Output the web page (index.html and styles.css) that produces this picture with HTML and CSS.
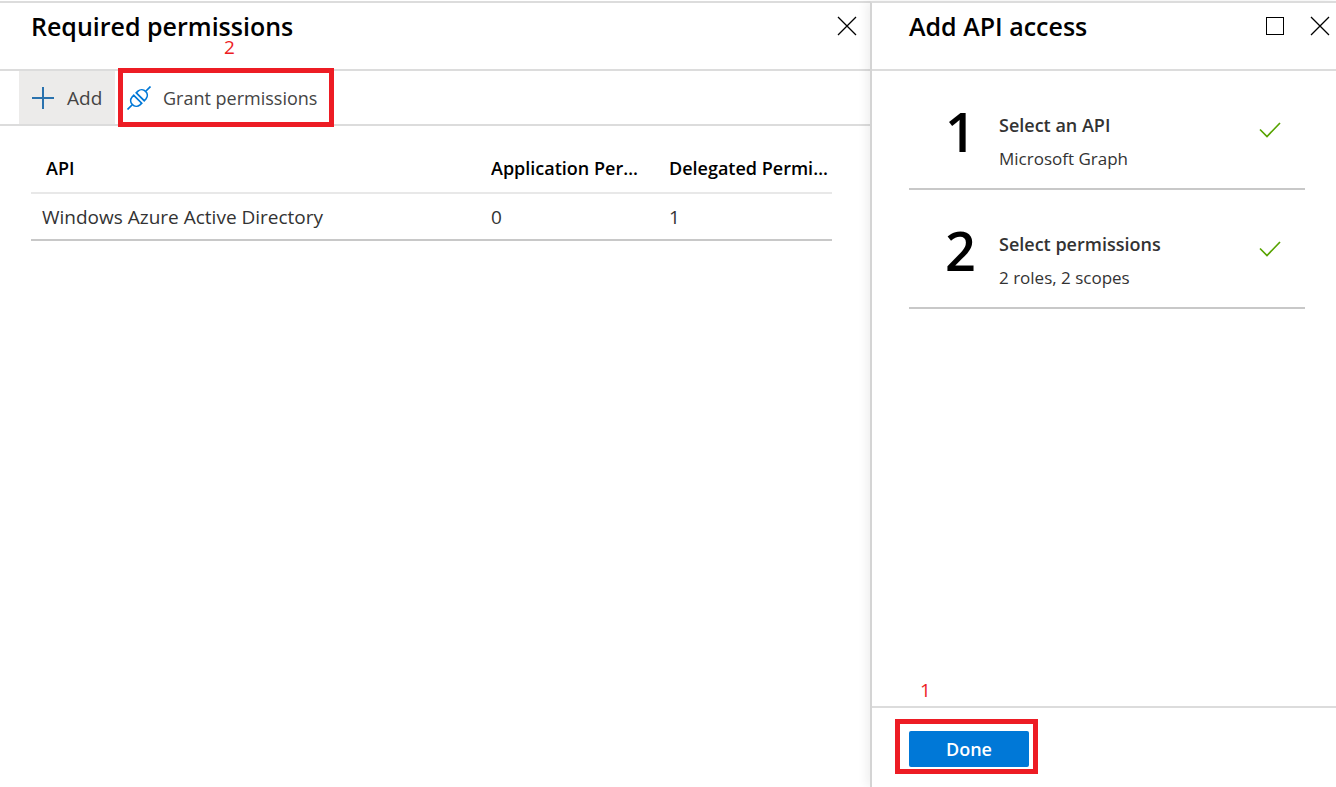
FILE: index.html
```html
<!DOCTYPE html>
<html lang="en">
<head>
<meta charset="utf-8">
<title>Required permissions</title>
<meta name="viewport" content="width=device-width, initial-scale=1">
<link rel="stylesheet" href="styles.css">
</head>
<body>
<div class="portal">
  <main class="blade blade-main">
    <header class="blade-header">
      <h1 class="blade-title">Required permissions</h1>
      <div class="blade-actions">
        <button class="icon-button" type="button" aria-label="Close required permissions">
          <svg width="20" height="20" viewBox="0 0 20 20"><path d="M1 1L19 19M19 1L1 19" fill="none" stroke="#000" stroke-width="1.3"/></svg>
        </button>
      </div>
    </header>
    <div class="toolbar">
      <button class="tool tool-add" type="button">
        <svg width="24" height="24" viewBox="0 0 24 24"><path d="M12 1V23M1 12H23" fill="none" stroke="#2a72ae" stroke-width="2"/></svg>
        <span>Add</span>
      </button>
      <div class="callout callout-tool">
        <button class="tool tool-grant" type="button">
          <svg width="24" height="24" viewBox="0 0 24 24" fill="none" stroke="#0078d7" stroke-width="1.7"><path d="M0.5 23.5L5 19M19 5L23.5 0.5"/><path d="M6.8 9.3L14.7 17.2L13 18.9A5.6 5.6 0 0 1 5.1 11Z"/><path d="M9.3 6.8L17.2 14.7L18.9 13A5.6 5.6 0 0 0 11 5.1Z"/></svg>
          <span>Grant permissions</span>
        </button>
        <span class="marker marker-tool">2</span>
      </div>
    </div>
    <table class="grid">
      <colgroup><col><col class="col-app"><col class="col-delegated"></colgroup>
      <thead>
        <tr><th scope="col">API</th><th scope="col">Application Permissions</th><th scope="col">Delegated Permissions</th></tr>
      </thead>
      <tbody>
        <tr><td>Windows Azure Active Directory</td><td>0</td><td>1</td></tr>
      </tbody>
    </table>
  </main>
  <aside class="blade blade-side">
    <header class="blade-header">
      <h2 class="blade-title">Add API access</h2>
      <div class="blade-actions">
        <button class="icon-button" type="button" aria-label="Maximize">
          <svg width="20" height="20" viewBox="0 0 20 20"><rect x="1.5" y="1.5" width="17" height="17" fill="none" stroke="#000"/></svg>
        </button>
        <button class="icon-button" type="button" aria-label="Close add API access">
          <svg width="20" height="20" viewBox="0 0 20 20"><path d="M1 1L19 19M19 1L1 19" fill="none" stroke="#000" stroke-width="1.3"/></svg>
        </button>
      </div>
    </header>
    <ol class="steps">
      <li class="step">
        <span class="step-number">1</span>
        <div class="step-text"><h3 class="step-title">Select an API</h3><p class="step-detail">Microsoft Graph</p></div>
        <svg class="step-check" width="22" height="16" viewBox="0 0 22 16"><path d="M1 7.5L8 14.5L21 1" fill="none" stroke="#57a300" stroke-width="1.7"/></svg>
      </li>
      <li class="step">
        <span class="step-number">2</span>
        <div class="step-text"><h3 class="step-title">Select permissions</h3><p class="step-detail">2 roles, 2 scopes</p></div>
        <svg class="step-check" width="22" height="16" viewBox="0 0 22 16"><path d="M1 7.5L8 14.5L21 1" fill="none" stroke="#57a300" stroke-width="1.7"/></svg>
      </li>
    </ol>
    <footer class="blade-footer">
      <div class="callout callout-done">
        <button class="done" type="button">Done</button>
        <span class="marker marker-done">1</span>
      </div>
    </footer>
  </aside>
</div>
</body>
</html>
```
FILE: styles.css
```css
* { box-sizing: border-box; }

body {
  margin: 0;
  background: #fff;
  color: #333;
  font-family: "Segoe UI", "Open Sans", "Noto Sans", sans-serif;
  font-size: 18px;
  line-height: 24px;
}

button { font: inherit; color: inherit; border: 0; background: none; padding: 0; }
h1, h2, h3, p, ol { margin: 0; padding: 0; }
svg { display: block; flex: none; }

.portal { display: flex; min-height: 100vh; padding-top: 1px; }

.blade { display: flex; flex-direction: column; border-top: 2px solid #dcdcdc; }
.blade-main { flex: 1; min-width: 0; }
.blade-side {
  width: 35%;
  max-width: 466px;
  border-left: 2px solid #d4d4d4;
  box-shadow: -3px 0 10px rgba(0, 0, 0, 0.07);
}

.blade-header {
  display: flex;
  justify-content: space-between;
  height: 68px;
  padding: 9px 13px 0 31px;
  border-bottom: 2px solid #dcdcdc;
}
.blade-side .blade-header { padding: 9px 6px 0 37px; }
.blade-title { color: #000; font-size: 25px; line-height: 28px; font-weight: 600; white-space: nowrap; }
.blade-actions { display: flex; gap: 25px; height: 28px; align-items: center; }
.icon-button { display: block; }

.toolbar { display: flex; height: 55px; padding-left: 19px; border-bottom: 2px solid #dcdcdc; }
.tool { display: flex; align-items: center; color: #444; white-space: nowrap; }
.tool-add { gap: 12px; width: 96px; padding-left: 12px; background: #ecebea; font-size: 19px; }
.tool-grant { gap: 12px; height: 100%; padding-left: 4px; }

.callout { position: relative; border: 5px solid #ed1c24; }
.callout-tool { width: 216px; height: 59px; margin: -3px 0 0 3px; }
.callout-done { padding: 7px 4px 2px 9px; }
.marker { position: absolute; color: #ed1c24; font-size: 19px; line-height: 14px; }
.marker-tool { left: 101px; top: -33px; }
.marker-done { left: 20px; top: -41px; }

.grid {
  width: calc(100% - 69px);
  margin: 17px 0 0 31px;
  table-layout: fixed;
  border-collapse: collapse;
  text-align: left;
}
.col-app { width: 178px; }
.col-delegated { width: 163px; }
.grid th, .grid td { padding: 0; overflow: hidden; text-overflow: ellipsis; white-space: nowrap; }
.grid th { height: 50px; color: #000; font-weight: 600; border-bottom: 2px solid #e8e8e8; }
.grid td { height: 47px; font-size: 19px; border-bottom: 2px solid #c8c8c8; }
.grid th:first-child { padding-left: 15px; }
.grid td:first-child { padding-left: 11px; }
.grid th:nth-child(2) { padding-right: 24px; }

.steps { flex: 1; padding: 0 31px 0 37px; list-style: none; }
.step { display: flex; height: 119px; padding-top: 33px; border-bottom: 2px solid #c8c8c8; }
.step-number { width: 90px; padding-left: 36px; color: #000; font-size: 54px; line-height: 54px; font-weight: 600; }
.step-text { flex: 1; padding-top: 9px; }
.step-title { font-size: 18px; line-height: 24px; font-weight: 600; }
.step-detail { padding-top: 10px; font-size: 17px; }
.step-check { margin: 18px 24px 0 0; }

.blade-footer { display: flex; height: 81px; padding: 11px 23px; border-top: 2px solid #dcdcdc; align-items: flex-start; }
.done { width: 120px; height: 36px; border-radius: 2px; background: #0078d7; color: #fff; font-size: 18px; font-weight: 600; display: block; }
```
